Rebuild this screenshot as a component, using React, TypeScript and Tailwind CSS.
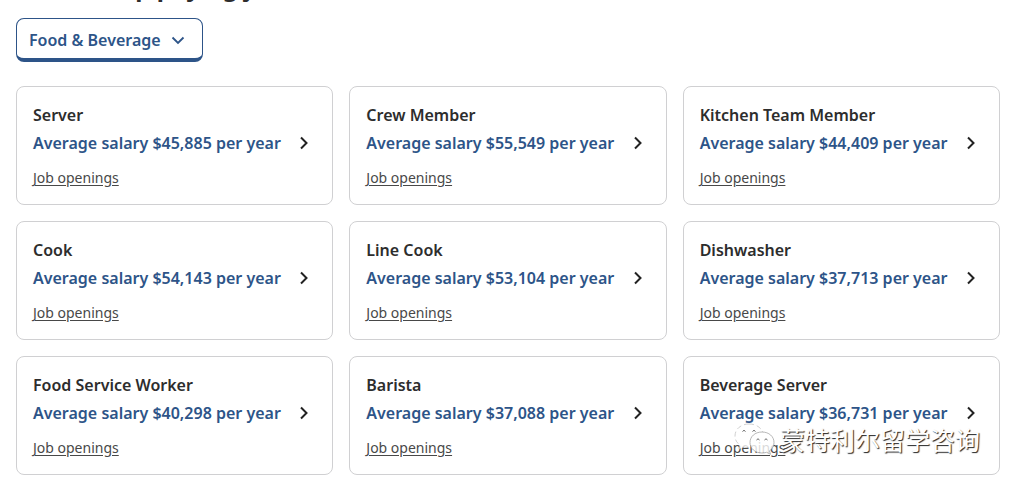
import { useState } from 'react';

const CATEGORIES = ['Food & Beverage', 'Retail', 'Healthcare'];

const JOBS = [
  { title: 'Server', salary: '$45,885' },
  { title: 'Crew Member', salary: '$55,549' },
  { title: 'Kitchen Team Member', salary: '$44,409' },
  { title: 'Cook', salary: '$54,143' },
  { title: 'Line Cook', salary: '$53,104' },
  { title: 'Dishwasher', salary: '$37,713' },
  { title: 'Food Service Worker', salary: '$40,298' },
  { title: 'Barista', salary: '$37,088' },
  { title: 'Beverage Server', salary: '$36,731' },
];

function JobCard({ title, salary }: { title: string; salary: string }) {
  return (
    <li className="rounded-lg border border-[#d0d0d2] p-4">
      <h3 className="text-base font-semibold text-[#2d2d2d]">{title}</h3>
      <a href="#salary" className="mt-1 flex items-center justify-between">
        <span className="text-base font-semibold whitespace-nowrap text-[#2d5488]">
          Average salary {salary} per year
        </span>
        <svg viewBox="0 0 24 24" className="size-6 shrink-0" fill="none" aria-hidden="true">
          <path d="M9 6.500 14.500 12 9 17.500" stroke="#222" strokeWidth="2" />
        </svg>
      </a>
      <a
        href="#openings"
        className="mt-3 block w-fit text-sm leading-[21px] text-[#484848] underline underline-offset-2"
      >
        Job openings
      </a>
    </li>
  );
}

function Watermark() {
  return (
    <div className="pointer-events-none absolute right-5 bottom-5 flex items-center gap-1">
      <svg viewBox="0 0 42 32" className="h-8 w-[42px]" aria-hidden="true">
        <g fill="#fff" fillOpacity="0.8" stroke="#999" strokeWidth="0.7">
          <path
            d="M15 1C7 1 1 6 1 13c0 4 2 7 5 9l-1 4 5-2c2 .6 4 .8 6 .7M15 1c7 0 12 3.500 14 8.500"
            stroke="#bbb"
            strokeDasharray="5 3"
          />
          <path d="M28 9c-7 0-12 4.500-12 10.500S21 30 28 30c1.500 0 3-.2 4.500-.7l4 2-1-3.500c3-2 4.500-5 4.500-8.300C40 13.500 35 9 28 9Z" />
        </g>
        <g fill="none" stroke="#666" strokeWidth="1">
          <path d="M8.500 8.500q1.500-2.500 3 0M18.500 8.500q1.500-2.500 3 0M22.500 17q1.500-2.500 3 0M30.500 17q1.500-2.500 3 0" />
        </g>
      </svg>
      <span className="font-['Noto_Sans_CJK_SC',sans-serif] text-[25px] leading-8 text-white [text-shadow:1px_1px_1px_#222]">
        蒙特利尔留学咨询
      </span>
    </div>
  );
}

export default function App() {
  const [category, setCategory] = useState(CATEGORIES[0]);

  return (
    <main className="overflow-hidden bg-white pr-3.5 pb-2.5 pl-4 font-['Noto_Sans',sans-serif]">
      <h2 className="-mt-[29px] text-2xl font-bold text-[#2d2d2d]">Browse top paying job industries</h2>
      <div className="relative mt-[15px] w-fit">
        <select
          aria-label="Industry"
          value={category}
          onChange={(e) => setCategory(e.target.value)}
          className="block h-11 w-[187px] appearance-none rounded-lg border border-b-4 border-[#2d5488] bg-white pt-0.5 pl-3 text-base font-semibold text-[#2d5488]"
        >
          {CATEGORIES.map((c) => (
            <option key={c}>{c}</option>
          ))}
        </select>
        <svg
          viewBox="0 0 24 24"
          className="pointer-events-none absolute top-2.5 right-3 size-6"
          fill="none"
          aria-hidden="true"
        >
          <path d="m5.500 9.500 5.500 5.500 5.500-5.500" stroke="#2d5488" strokeWidth="1.8" />
        </svg>
      </div>
      <div className="relative mt-6">
        <ul className="grid grid-cols-3 gap-4">
          {JOBS.map((job) => (
            <JobCard key={job.title} title={job.title} salary={job.salary} />
          ))}
        </ul>
        <Watermark />
      </div>
    </main>
  );
}
